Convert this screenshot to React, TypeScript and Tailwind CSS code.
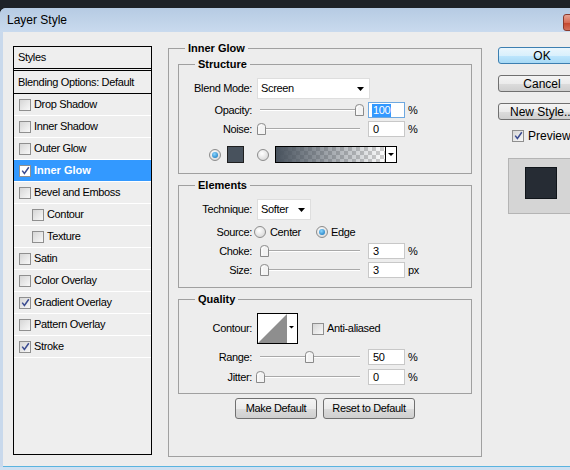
import React from "react";

const F = "font-['Liberation_Sans',Arial,sans-serif]";

function Arrow() {
  return (
    <svg width="7" height="4" viewBox="0 0 7 4" className="shrink-0">
      <path d="M0 0H7L3.5 4Z" fill="#000" />
    </svg>
  );
}

function Check({ checked, light }: { checked?: boolean; light?: boolean }) {
  return (
    <span
      className={
        "w-[12px] h-[12px] border border-[#8f8f8f] flex items-center justify-center shrink-0 " +
        (light ? "bg-white" : "bg-[linear-gradient(135deg,#d6d6d6,#f8f8f8)]")
      }
    >
      {checked && (
        <svg width="9" height="9" viewBox="0 0 9 9">
          <path d="M1.2 4.6 L3.4 7.4 L7.8 1.2" stroke="#3b4c91" strokeWidth="1.5" fill="none" />
        </svg>
      )}
    </span>
  );
}

function Radio({ on, className = "" }: { on?: boolean; className?: string }) {
  return (
    <span
      className={
        "w-[12px] h-[12px] rounded-full border border-[#8c8c8c] bg-[radial-gradient(circle_at_40%_35%,#ffffff,#cfcfcf)] flex items-center justify-center shrink-0 " +
        className
      }
    >
      {on && <span className="w-[6px] h-[6px] rounded-full bg-[radial-gradient(circle_at_40%_35%,#8ad6ff,#0b6cb5)]" />}
    </span>
  );
}

function Slider({ pos }: { pos: number }) {
  return (
    <div className="relative w-[100px] h-[16px] shrink-0">
      <div className="absolute left-0 right-0 top-[7px] h-[2px] border-t border-[#a9a9a9] border-b border-b-white" />
      <svg className="absolute top-[2px]" style={{ left: pos }} width="9" height="12" viewBox="0 0 9 12">
        <path d="M0.5 11.5 V3.5 Q0.5 0.5 4.5 0.5 Q8.5 0.5 8.5 3.5 V11.5 Z" fill="#f3f3f3" stroke="#8a8a8a" />
        <path d="M2 10.5 V4 Q2 2 4.5 2" stroke="#ffffff" fill="none" />
      </svg>
    </div>
  );
}

function Input({ value, focused }: { value: string; focused?: boolean }) {
  return (
    <div
      className={
        "ml-[8px] w-[37px] h-[16px] bg-white border flex items-center pl-[3px] shrink-0 " +
        (focused ? "border-[#6ea8e0]" : "border-[#c8c8c8]")
      }
    >
      {focused ? <span className="bg-[#3399ff] text-white leading-[13px] px-[1px]">{value}</span> : <span className="pl-[1px]">{value}</span>}
    </div>
  );
}

function SliderRow({
  label,
  pos,
  value,
  unit,
  focused,
  mt,
}: {
  label: string;
  pos: number;
  value: string;
  unit: string;
  focused?: boolean;
  mt: string;
}) {
  return (
    <div className={"flex items-center h-[16px] " + mt}>
      <span className="w-[73px] text-right shrink-0">{label}</span>
      <div className="ml-[8px]">
        <Slider pos={pos} />
      </div>
      <Input value={value} focused={focused} />
      <span className="ml-[3px]">{unit}</span>
    </div>
  );
}

function Select({ text, w }: { text: string; w: string }) {
  return (
    <div className={"ml-[5px] h-[21px] bg-white border border-[#dedede] flex items-center justify-between pl-[3px] pr-[5px] " + w}>
      <span>{text}</span>
      <Arrow />
    </div>
  );
}

function Btn({ children, w }: { children: React.ReactNode; w: string }) {
  return (
    <div
      className={
        "h-[21px] rounded-[3px] border border-[#707070] bg-[linear-gradient(180deg,#f4f4f4_0%,#ebebeb_50%,#dcdcdc_51%,#cfcfcf_100%)] flex items-center justify-center " +
        w
      }
    >
      {children}
    </div>
  );
}

function SideBtn({ children, ok, mt }: { children: React.ReactNode; ok?: boolean; mt: string }) {
  return (
    <div
      className={
        "w-[88px] h-[17px] rounded-[3px] border flex items-center justify-center text-[12px] whitespace-nowrap " +
        mt +
        " " +
        (ok
          ? "border-[#3c7fb1] bg-[linear-gradient(180deg,#eaf6fd_0%,#d9f0fc_50%,#bee6fd_51%,#a7d9f5_100%)]"
          : "border-[#707070] bg-[linear-gradient(180deg,#f4f4f4_0%,#ebebeb_50%,#dcdcdc_51%,#cfcfcf_100%)]")
      }
    >
      {children}
    </div>
  );
}

const styles: { label: string; checked?: boolean; active?: boolean; indent?: boolean }[] = [
  { label: "Drop Shadow" },
  { label: "Inner Shadow" },
  { label: "Outer Glow" },
  { label: "Inner Glow", checked: true, active: true },
  { label: "Bevel and Emboss" },
  { label: "Contour", indent: true },
  { label: "Texture", indent: true },
  { label: "Satin" },
  { label: "Color Overlay" },
  { label: "Gradient Overlay", checked: true },
  { label: "Pattern Overlay" },
  { label: "Stroke", checked: true },
];

function GradientBar() {
  return (
    <svg width="122" height="17" viewBox="0 0 122 17" className="shrink-0">
      <defs>
        <pattern id="chk" width="8" height="8" patternUnits="userSpaceOnUse" x="1" y="1">
          <rect width="8" height="8" fill="#ffffff" />
          <rect width="4" height="4" fill="#cfcfcf" />
          <rect x="4" y="4" width="4" height="4" fill="#cfcfcf" />
        </pattern>
        <linearGradient id="gl" x1="0" x2="1" y1="0" y2="0">
          <stop offset="0" stopColor="#48525d" stopOpacity="1" />
          <stop offset="1" stopColor="#48525d" stopOpacity="0" />
        </linearGradient>
      </defs>
      <rect x="0.5" y="0.5" width="121" height="16" fill="#fff" stroke="#000" />
      <rect x="1" y="1" width="109" height="15" fill="url(#chk)" />
      <rect x="1" y="1" width="109" height="15" fill="url(#gl)" />
      <line x1="110.5" y1="1" x2="110.5" y2="16" stroke="#000" />
      <path d="M113 7H119L116 10Z" fill="#000" />
    </svg>
  );
}

function ContourBox() {
  return (
    <svg width="41" height="31" viewBox="0 0 41 31" className="ml-[5px] shrink-0">
      <rect x="0.5" y="0.5" width="40" height="30" fill="#fff" stroke="#000" />
      <path d="M1 30 L30 1 L30 30 Z" fill="#8e8e8e" />
      <path d="M32 13H37L34.5 15.5Z" fill="#000" />
    </svg>
  );
}

export default function App() {
  return (
    <div className={"w-[570px] h-[470px] overflow-hidden bg-[#1e2227] text-[11px] text-black tracking-[-0.35px] " + F}>
      <div className="h-[8px] bg-[#1e2227]" />
      <div className="w-[612px] h-[462px] flex flex-col rounded-tl-[6px] bg-[#c9d9ec] overflow-hidden">
        {/* title bar */}
        <div className="h-[24px] shrink-0 flex items-center justify-between bg-[linear-gradient(180deg,#b6cbe3,#c9daee)] pl-[7px] pr-[6px] tracking-normal">
          <span className="text-[12px] text-black">Layer Style</span>
          <div className="mt-[4px] w-[43px] h-[17px] rounded-[3px] border border-[#8a3a2e] bg-[linear-gradient(180deg,#e8a493_0%,#d66c56_50%,#c4442b_51%,#d2705a_100%)]" />
        </div>
        {/* body */}
        <div className="flex-1 ml-[3px] bg-[#ededed] flex items-start pl-[10px] border-b border-[#5ab4e0]">
          {/* left list */}
          <div className="mt-[14px] w-[139px] h-[409px] shrink-0 border border-black bg-[#eeeeee]">
            <div className="h-[24px] border-b-[3px] border-double border-black flex items-center pl-[4px]">Styles</div>
            <div className="h-[23px] border-b border-black flex items-center pl-[4px]">Blending Options: Default</div>
            {styles.map((s) => (
              <div
                key={s.label}
                className={
                  "h-[22px] border-b border-white flex items-center gap-[3px] " +
                  (s.indent ? "pl-[18px] " : "pl-[5px] ") +
                  (s.active ? "bg-[#3399ff] text-white font-bold tracking-normal" : "")
                }
              >
                <Check checked={s.checked} light={s.active} />
                <span>{s.label}</span>
              </div>
            ))}
          </div>

          {/* main group */}
          <fieldset className="ml-[16px] mt-[9px] w-[314px] h-[416px] shrink-0 border border-[#a0a0a0] px-[9px]">
            <legend className="ml-[7px] px-[3px] font-bold leading-[14px] tracking-normal">Inner Glow</legend>

            {/* Structure */}
            <fieldset className="mt-[2px] border border-[#a0a0a0] pb-[10px]">
              <legend className="ml-[16px] px-[3px] font-bold leading-[14px] tracking-normal">Structure</legend>
              <div className="flex items-center h-[21px] mt-[7px]">
                <span className="w-[73px] text-right shrink-0">Blend Mode:</span>
                <Select text="Screen" w="w-[113px]" />
              </div>
              <SliderRow label="Opacity:" pos={95} value="100" unit="%" focused mt="mt-[3px]" />
              <SliderRow label="Noise:" pos={-3} value="0" unit="%" mt="mt-[3px]" />
              <div className="flex items-center h-[17px] mt-[9px] pl-[30px]">
                <Radio on />
                <span className="ml-[6px] w-[17px] h-[17px] border border-[#1f1f1f] bg-[#48525d] shrink-0" />
                <Radio className="ml-[13px]" />
                <span className="ml-[6px]">
                  <GradientBar />
                </span>
              </div>
            </fieldset>

            {/* Elements */}
            <fieldset className="mt-[4px] border border-[#a0a0a0] pb-[9px]">
              <legend className="ml-[16px] px-[3px] font-bold leading-[14px] tracking-normal">Elements</legend>
              <div className="flex items-center h-[21px] mt-[7px]">
                <span className="w-[73px] text-right shrink-0">Technique:</span>
                <Select text="Softer" w="w-[54px]" />
              </div>
              <div className="flex items-center h-[16px] mt-[4px]">
                <span className="w-[73px] text-right shrink-0">Source:</span>
                <Radio className="ml-[2px]" />
                <span className="ml-[4px] w-[46px]">Center</span>
                <Radio on />
                <span className="ml-[3px]">Edge</span>
              </div>
              <SliderRow label="Choke:" pos={0} value="3" unit="%" mt="mt-[3px]" />
              <SliderRow label="Size:" pos={0} value="3" unit="px" mt="mt-[3px]" />
            </fieldset>

            {/* Quality */}
            <fieldset className="mt-[4px] border border-[#a0a0a0] pb-[8px]">
              <legend className="ml-[16px] px-[3px] font-bold leading-[14px] tracking-normal">Quality</legend>
              <div className="flex items-center h-[31px] mt-[7px]">
                <span className="w-[73px] text-right shrink-0">Contour:</span>
                <ContourBox />
                <span className="ml-[14px]">
                  <Check />
                </span>
                <span className="ml-[3px]">Anti-aliased</span>
              </div>
              <SliderRow label="Range:" pos={45} value="50" unit="%" mt="mt-[5px]" />
              <SliderRow label="Jitter:" pos={-4} value="0" unit="%" mt="mt-[4px]" />
            </fieldset>

            <div className="mt-[4px] flex justify-center gap-[6px]">
              <Btn w="w-[82px]">Make Default</Btn>
              <Btn w="w-[92px]">Reset to Default</Btn>
            </div>
          </fieldset>

          {/* right column */}
          <div className="ml-[16px] mt-[15px] flex flex-col shrink-0 tracking-normal">
            <SideBtn ok mt="">OK</SideBtn>
            <SideBtn mt="mt-[11px]">Cancel</SideBtn>
            <SideBtn mt="mt-[11px]">New Style...</SideBtn>
            <div className="mt-[9px] h-[13px] flex items-center pl-[14px] gap-[4px] text-[12px]">
              <Check checked />
              <span>Preview</span>
            </div>
            <div className="mt-[16px] ml-[10px] w-[66px] h-[56px] border border-[#b4b4b4] bg-[#d5d5d5] flex justify-center pt-[8px]">
              <div className="w-[32px] h-[32px] border border-[#10151a] bg-[#262c34]" />
            </div>
          </div>
        </div>
        <div className="h-[3px] bg-[#cfe0f1] shrink-0" />
      </div>
    </div>
  );
}
